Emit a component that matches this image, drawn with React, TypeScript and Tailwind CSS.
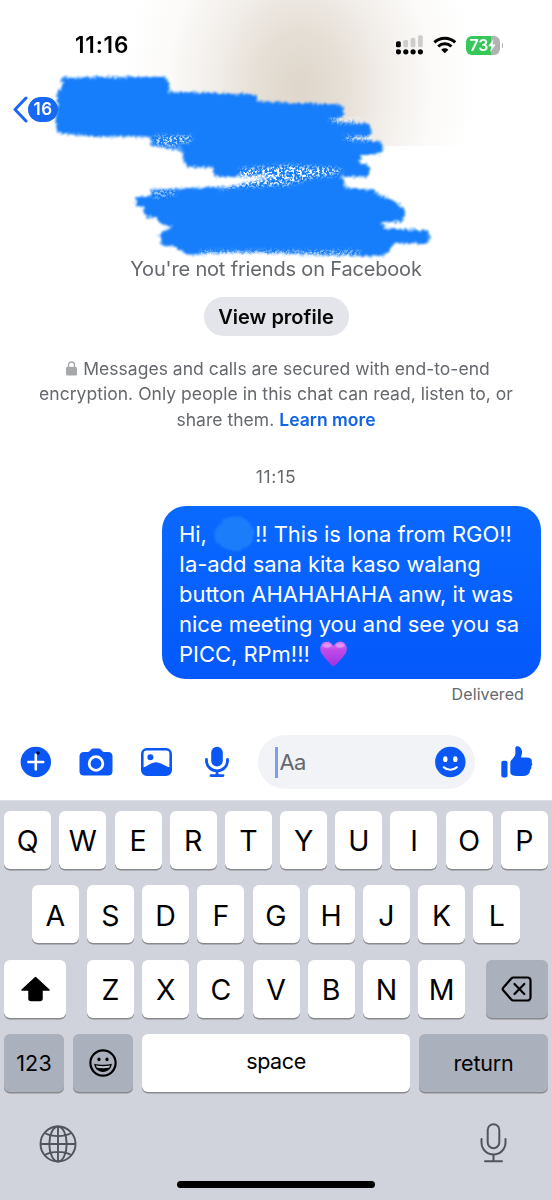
import type { ReactNode } from "react";

const BLUE = "#0a57f5";

const StatusIcons = () => (
  <div className="flex items-center">
    <svg width="28" height="20" viewBox="0 0 28 20">
      <rect x="0" y="6.3" width="4.8" height="6" rx="1.6" fill="#000" />
      <rect x="7.3" y="5" width="4.8" height="7.3" rx="1.6" fill="#cfcdcb" />
      <rect x="14.6" y="2.8" width="4.8" height="9.5" rx="1.6" fill="#cfcdcb" />
      <rect x="22" y="0.2" width="4.8" height="12.1" rx="1.6" fill="#cfcdcb" />
      {[2.4, 9.8, 17.1, 24.4].map((x) => (
        <circle key={x} cx={x} cy="16.8" r="2.6" fill="#000" />
      ))}
    </svg>
    <svg width="24" height="18" viewBox="0 0 24 18" className="ml-[9px]" fill="none" stroke="#000" strokeWidth="3">
      <path d="M1.4 6.4a15 15 0 0 1 20.8 0" />
      <path d="M5.2 10.5a9.6 9.6 0 0 1 13.2 0" />
      <path d="M11.8 17.2 8.2 13.7a5.3 5.3 0 0 1 7.2 0z" fill="#000" stroke="none" />
    </svg>
    <div className="ml-[9px] flex h-[19px] w-[34px] items-center overflow-hidden rounded-[6px] bg-gradient-to-r from-[#36c759] from-[74%] to-[#b3b1b4] to-[74%] pl-1">
      <span className="text-[16px] leading-none font-semibold tracking-[-0.2px] text-white">73</span>
      <svg width="8" height="13" viewBox="0 0 8 13" fill="#fff">
        <path d="M5.6 0 .3 7.2h3L2.2 13 7.7 5.4H4.6z" />
      </svg>
    </div>
    <div className="ml-[2px] h-[5px] w-[1.5px] rounded-r bg-[#b3b1b4]" />
  </div>
);

const Scribble = () => (
  <svg className="pointer-events-none absolute top-0 left-0" width="460" height="270" viewBox="0 0 460 270">
    <defs>
      <filter id="rough" x="-5%" y="-5%" width="110%" height="110%">
        <feTurbulence type="fractalNoise" baseFrequency="0.4" numOctaves="2" seed="4" result="n" />
        <feDisplacementMap in="SourceGraphic" in2="n" scale="7" xChannelSelector="R" yChannelSelector="G" />
        <feGaussianBlur stdDeviation="0.8" />
      </filter>
      <filter id="speck" x="-5%" y="-20%" width="110%" height="140%">
        <feGaussianBlur in="SourceGraphic" stdDeviation="2" result="s" />
        <feTurbulence type="fractalNoise" baseFrequency="0.4" numOctaves="3" seed="9" />
        <feColorMatrix values="0 0 0 0 1  0 0 0 0 1  0 0 0 0 1  5 0 0 0 -2.2" />
        <feGaussianBlur stdDeviation="0.6" result="n" />
        <feComposite in="n" in2="s" operator="in" />
      </filter>
    </defs>
    <g fill="#147efb" stroke="#147efb" strokeWidth="1" strokeLinejoin="round" filter="url(#rough)">
      <path d="M62 78 165 77 169 83 168 92 255 95 258 102 340 105 344 112 342 117 330 121 368 124 371 131 369 136 345 138 380 142 383 148 380 153 362 155 357 163 368 165 370 171 367 176 215 176 213 167 186 166 182 150 152 145 150 136 100 136 60 133 56 128 58 91 63 88Z" />
      <path d="M340 176 344 181 344 188 374 190 378 195 390 199 402 207 405 213 402 221 380 222 386 229 427 231 430 237 427 243 394 243 386 254 375 256 250 252 185 254 175 246 162 245 160 235 172 227 160 223 157 217 146 217 144 207 136 205 137 197 152 196 151 190 230 187 280 176Z" />
    </g>
    <g fill="#fff" filter="url(#speck)">
      <path d="M240 169 290 165 343 169 335 175 310 178 290 185 235 187 215 190 240 180Z" />
      <path d="M154 136h38v5l-20 6-18-3Z" opacity="0.8" />
      <path d="M152 190h24v4l-22 4Z" opacity="0.7" />
      <path d="M200 251h160v5H200Z" opacity="0.8" />
      <path d="M328 118h34v5h-28Z" opacity="0.7" />
      <path d="M342 136h30v5h-26Z" opacity="0.7" />
    </g>
  </svg>
);

const Heart = () => (
  <svg className="ml-[10px] inline-block align-[-5px]" width="27" height="26" viewBox="0 0 27 26">
    <defs>
      <linearGradient id="heart" x1="0" y1="0" x2="0" y2="1">
        <stop offset="0" stopColor="#e07bf3" />
        <stop offset="0.35" stopColor="#c04ae8" />
        <stop offset="1" stopColor="#9b35e0" />
      </linearGradient>
    </defs>
    <path
      d="M13.5 25.5C12.6 25.5 6.5 19.8.9 11.5C-.8 6.5 1.3.7 6.7.7C9.8.7 12.3 2.6 13.5 5.3C14.7 2.6 17.2.7 20.3.7C25.7.7 27.8 6.5 26.1 11.5C20.5 19.8 14.4 25.5 13.5 25.5Z"
      fill="url(#heart)"
    />
    <ellipse cx="7" cy="4.6" rx="4" ry="2.2" fill="#f3b5fb" opacity="0.55" />
    <ellipse cx="20" cy="4.6" rx="4" ry="2.2" fill="#f3b5fb" opacity="0.55" />
  </svg>
);

const Key = ({ children, className = "w-[47px] bg-white" }: { children: ReactNode; className?: string }) => (
  <button className={`flex h-[58px] shrink-0 items-center justify-center rounded-[6px] shadow-[0_1.5px_0_#898a8d] ${className}`}>
    {children}
  </button>
);

const Letters = ({ row }: { row: string }) => (
  <div className="flex gap-[8.2px]">
    {row.split("").map((letter) => (
      <Key key={letter}>
        <span className="mt-[3px] text-[28.5px] leading-none font-normal">{letter}</span>
      </Key>
    ))}
  </div>
);

const Keyboard = () => (
  <section className="flex h-[400px] flex-col border-t border-[#dcdee3] bg-[#d0d3db] px-1 pt-[10px] text-black">
    <div className="flex flex-col gap-[16.3px]">
      <div className="flex justify-center">
        <Letters row="QWERTYUIOP" />
      </div>
      <div className="flex justify-center">
        <Letters row="ASDFGHJKL" />
      </div>
      <div className="flex justify-between">
        <Key className="w-[62px] bg-white">
          <svg width="30" height="26" viewBox="0 0 30 26">
            <path d="M15.5 1.5 29 14H22V22.5a2 2 0 0 1-2 2H11a2 2 0 0 1-2-2V14H2Z" stroke="#000" strokeWidth="1.5" strokeLinejoin="round" />
          </svg>
        </Key>
        <Letters row="ZXCVBNM" />
        <Key className="w-[62px] bg-[#aab0bc]">
          <svg width="32" height="26" viewBox="0 0 32 26" fill="none" stroke="#000" strokeWidth="2.2" strokeLinejoin="round" strokeLinecap="round">
            <path d="M12.5 1.5H26.5a3 3 0 0 1 3 3V21.5a3 3 0 0 1-3 3H12.5a3 3 0 0 1-2.2-1L2.4 14.5a2.2 2.2 0 0 1 0-3L10.3 2.5a3 3 0 0 1 2.2-1Z" />
            <path d="m13.5 8 9.8 10M23.3 8l-9.8 10" />
          </svg>
        </Key>
      </div>
      <div className="flex justify-between text-[21.5px]">
        <Key className="w-[60px] bg-[#aab0bc]">
          <span className="tracking-[0.2px]">123</span>
        </Key>
        <Key className="w-[60px] bg-[#aab0bc]">
          <svg width="28" height="28" viewBox="0 0 28 28">
            <circle cx="14" cy="14" r="12.6" fill="none" stroke="#000" strokeWidth="2.2" />
            <ellipse cx="10" cy="10.4" rx="1.6" ry="1.8" />
            <ellipse cx="18" cy="10.4" rx="1.6" ry="1.8" />
            <path d="M5.2 14.8c5 1.3 12.6 1.3 17.6 0-.3 4.8-4 8.2-8.8 8.2s-8.5-3.4-8.8-8.2Z" />
            <path d="M7 16.5c4.5 1 9.5 1 14 0l-.7 2c-4 1-8.6 1-12.6 0Z" fill="#c3c7cf" />
          </svg>
        </Key>
        <Key className="w-[268px] bg-white">
          <span className="-mt-1 tracking-[-0.4px]">space</span>
        </Key>
        <Key className="w-[129px] bg-[#aab0bc]">
          <span className="tracking-[-0.2px]">return</span>
        </Key>
      </div>
    </div>
    <div className="mt-[33px] flex items-center justify-between pr-[41px] pl-[35px] text-[#50545c]">
      <svg width="38" height="38" viewBox="0 0 38 38" fill="none" stroke="currentColor" strokeWidth="1.9">
        <circle cx="19" cy="19" r="17.5" />
        <ellipse cx="19" cy="19" rx="8.7" ry="17.5" />
        <path d="M19 1.5v35M1.5 19h35M5.8 8c7.5 4.2 18.9 4.2 26.4 0M5.8 30c7.5-4.2 18.9-4.2 26.4 0" />
      </svg>
      <svg width="27" height="40" viewBox="0 0 27 40" className="-mt-[2px]" fill="none" stroke="currentColor" strokeWidth="2" strokeLinecap="round">
        <rect x="7.7" y="1.2" width="11.6" height="24" rx="5.8" />
        <path d="M1.5 16v3.5a12 12 0 0 0 24 0V16M13.5 31.5V38M5 38.3h17" />
      </svg>
    </div>
    <div className="mx-auto mt-[18px] h-[7px] w-[198px] rounded-full bg-black" />
  </section>
);

const Composer = () => (
  <div className="flex h-[54px] items-center pl-5">
    <svg width="32" height="32" viewBox="0 0 32 32">
      <circle cx="15.8" cy="16" r="15.2" fill={BLUE} />
      <path d="M15.8 8.6v14.8M8.4 16h14.8" stroke="#fff" strokeWidth="2.6" strokeLinecap="round" />
      <circle cx="18" cy="7" r="1.7" fill="#070b35" />
    </svg>
    <svg width="34" height="28" viewBox="0 0 34 28" className="ml-[27px]">
      <path d="M5 4h4c1 0 1.6-.5 2.2-1.4C12 1.2 13 .5 14.3.5h5.4c1.3 0 2.3.7 3.1 2.1C23.4 3.5 24 4 25 4h4c3 0 4.5 1.5 4.5 4.5V23c0 3-1.5 4.5-4.5 4.5H5C2 27.5.5 26 .5 23V8.5C.5 5.5 2 4 5 4Z" fill={BLUE} />
      <circle cx="17" cy="15.5" r="6.8" fill={BLUE} stroke="#fff" strokeWidth="2.8" />
    </svg>
    <svg width="31" height="28" viewBox="0 0 31 28" className="ml-[28px]">
      <rect x="1.3" y="1.3" width="28.4" height="25.4" rx="4.5" fill="#fff" stroke={BLUE} strokeWidth="2.6" />
      <circle cx="9.4" cy="9.3" r="3" fill={BLUE} />
      <path d="M2 19.5c3.5-.8 5-2.5 7.5-3.8 3.5-2 7.5-2 11 0 2.500 1.3 5 3 9 3.8v3.5a4 4 0 0 1-4 4H6a4 4 0 0 1-4-4Z" fill={BLUE} />
    </svg>
    <svg width="26" height="32" viewBox="0 0 26 32" className="ml-[32px]" fill="none" stroke={BLUE} strokeWidth="2.8" strokeLinecap="round">
      <rect x="7.2" y="0.8" width="11.6" height="19.6" rx="5.8" fill={BLUE} stroke="none" />
      <path d="M2.5 13.5v1.3a10.5 10 0 0 0 21 0v-1.3M13 25v4M7 29.6h12" />
    </svg>
    <div className="ml-[28px] flex h-[54px] w-[217px] items-center rounded-full bg-[#f2f3f7] pr-[9px] pl-[17px]">
      <div className="h-[31px] w-[2.5px] bg-[#7b9ff0]" />
      <span className="ml-[2px] flex-1 text-[22px] tracking-[-0.6px] text-[#65686c]">Aa</span>
      <svg width="32" height="32" viewBox="0 0 32 32">
        <circle cx="16.3" cy="16" r="15.2" fill={BLUE} />
        <ellipse cx="11.3" cy="13.2" rx="2.2" ry="2.9" fill="#fff" />
        <ellipse cx="21.3" cy="13.2" rx="2.2" ry="2.9" fill="#fff" />
        <path d="M9.8 21.3c3.3 3.3 9.7 3.3 13 0" fill="none" stroke="#fff" strokeWidth="2.2" strokeLinecap="round" />
      </svg>
    </div>
    <svg width="32" height="32" viewBox="0 0 32 32" className="ml-[26px]" fill={BLUE}>
      <rect x="0.3" y="14.8" width="6.2" height="16.6" rx="2" />
      <path d="M14.3 1.8C14.5.5 15.7 0 17 .3c2.6.7 4.1 3 4.1 6 0 1.800-.5 3.400-1.200 5.200h6.100c2.600.1 4.900 1.200 4.900 3.200 0 .8-.2 1.200-.4 1.600.6.5.9 1.100.8 2-.1.9-.6 1.600-1.300 2 .4.5.5 1.200.3 2-.2.9-.8 1.500-1.500 1.800.3.6.3 1.200 0 1.900-.9 2.800-3.300 3.900-6.700 4-3.700.1-7.700 0-9.900-.5-1.900-.5-2.900-1.700-2.900-3.800V17c0-2.300 1.500-3.300 3-5 2.300-2.600 2.300-4.600 2-7.700Z" />
    </svg>
  </div>
);

const App = () => {
  return (
    <main className="relative flex h-[1200px] w-[552px] flex-col overflow-hidden bg-white font-['Inter','Liberation_Sans',sans-serif]">
      <div className="absolute top-0 left-0 h-[146px] w-full bg-[radial-gradient(ellipse_175px_230px_at_300px_88px,#ded6ca_0%,#e6dfd6_25%,#f2eeea_50%,#fbfaf8_75%,#ffffff_100%)]" />
      <Scribble />

      <header className="relative flex h-[146px] shrink-0 flex-col">
        <div className="flex items-center justify-between pt-[31px] pr-[49px] pl-[75px]">
          <span className="text-[22.5px] leading-[28px] font-semibold tracking-[0.8px] text-black">11:16</span>
          <StatusIcons />
        </div>
        <div className="mt-[37px] flex items-center pl-[13px]">
          <svg width="15" height="27" viewBox="0 0 15 27" fill="none" stroke="#1a66f0" strokeWidth="3" strokeLinecap="round" strokeLinejoin="round">
            <path d="M13 2 2 13.5 13 25" />
          </svg>
          <span className="flex h-[25px] w-[30px] items-center justify-center rounded-full bg-[#1769f3] text-[17px] font-semibold tracking-[0.4px] text-white">16</span>
        </div>
      </header>

      <section className="relative mt-[110px] flex shrink-0 flex-col items-center text-[#65686c]">
        <p className="text-[20px] leading-[26px] tracking-[-0.17px]">You're not friends on Facebook</p>
        <button className="mt-[15px] flex h-[39px] w-[145px] items-center justify-center rounded-full bg-[#e3e5ea] text-[20px] font-semibold text-[#080809]">
          View profile
        </button>
        <div className="mt-[20px] flex flex-col items-center text-[17.5px] leading-[25.3px] tracking-[0.03px] whitespace-nowrap">
          <p className="flex items-center pl-[4px]">
            <svg width="11" height="15" viewBox="0 0 11 15" className="mr-[6px]">
              <rect x="0" y="5.7" width="11" height="8.8" rx="1.5" fill="#a6a8ab" />
              <path d="M2.5 6.5V4a3 3 0 0 1 6 0v2.5" fill="none" stroke="#a6a8ab" strokeWidth="1.3" />
            </svg>
            <span>Messages and calls are secured with end-to-end</span>
          </p>
          <p>encryption. Only people in this chat can read, listen to, or</p>
          <p>
            share them. <span className="font-semibold text-[#0f63e6]">Learn more</span>
          </p>
        </div>
        <time className="mt-[32px] text-[17.5px] leading-[25px] tracking-[0.7px]">11:15</time>
      </section>

      <section className="relative mt-[17px] flex shrink-0 flex-col items-end pr-[11px]">
        <div className="h-[173px] w-[379px] rounded-[24px] bg-gradient-to-b from-[#0a69ff] to-[#0558fb] pt-[13px] pl-[17px] text-[22px] leading-[30px] tracking-[-0.03px] whitespace-nowrap text-white">
          <p className="flex items-center">
            <span>Hi,</span>
            <svg width="42" height="38" viewBox="0 0 42 38" className="-my-1 ml-[6px]">
              <path d="M3 15 8 10 9 5 18 2 29 2 35 7 39 13 42 17 40 24 37 30 31 33 24 36 15 35 9 31 4 27 1 21Z" fill="#1a7dfb" stroke="#1a7dfb" filter="url(#rough)" />
            </svg>
            <span>!! This is Iona from RGO!!</span>
          </p>
          <p>Ia-add sana kita kaso walang</p>
          <p>button AHAHAHAHA anw, it was</p>
          <p>nice meeting you and see you sa</p>
          <p>
            PICC, RPm!!!
            <Heart />
          </p>
        </div>
        <p className="mt-[3px] pr-[17px] text-[16px] leading-[24px] tracking-[0.1px] text-[#65686c]">Delivered</p>
      </section>

      <div className="relative mt-auto pb-[11px]">
        <Composer />
      </div>
      <Keyboard />
    </main>
  );
};

export default App;
